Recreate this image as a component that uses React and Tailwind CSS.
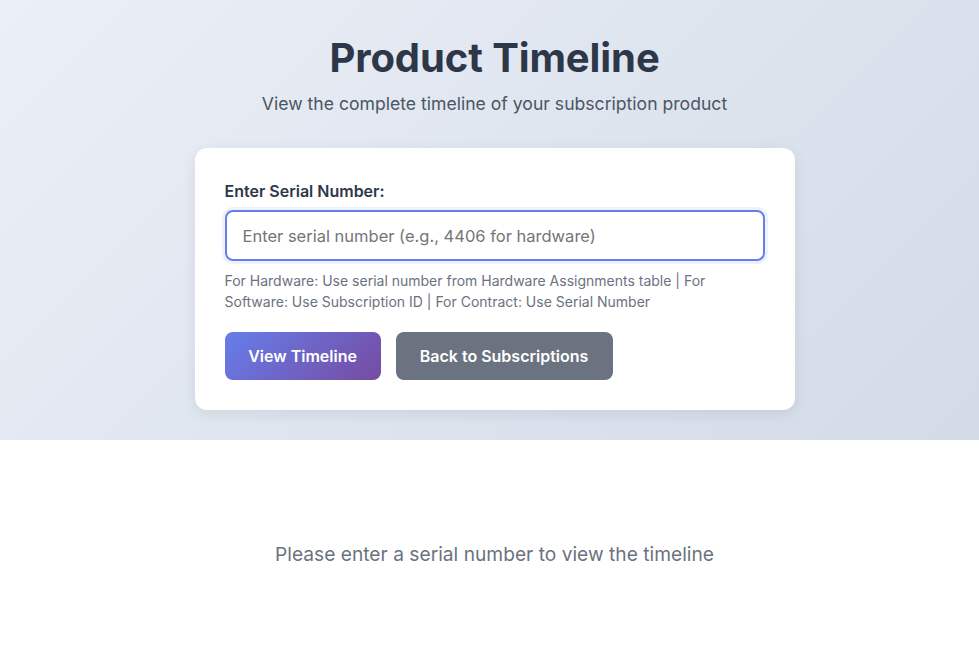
import { useState } from 'react'

export default function App() {
  const [serial, setSerial] = useState('')

  return (
    <div className="min-h-screen bg-white font-['Inter','Noto_Sans',sans-serif]">
      <div className="h-[440px] bg-[linear-gradient(135deg,#ebeff7_0%,#d3dbe7_100%)] flex flex-col items-center pt-[33px] pl-[10px]">
        <h1 className="text-[40px] leading-[50px] font-bold text-[#2d3748] tracking-[-0.1px]">Product Timeline</h1>
        <p className="mt-[8px] text-[17.6px] leading-[26px] text-[#4b5563]">
          View the complete timeline of your subscription product
        </p>

        <div className="mt-[31px] w-[600px] bg-white rounded-xl shadow-[0_4px_14px_rgba(0,0,0,0.08)] px-[30px] pt-[32px] pb-[30px]">
          <label className="block text-[16px] leading-[22px] font-semibold text-[#2d3748]">
            Enter Serial Number:
          </label>
          <input
            autoFocus
            value={serial}
            onChange={(e) => setSerial(e.target.value)}
            placeholder="Enter serial number (e.g., 4406 for hardware)"
            className="mt-[8px] block w-full h-[51px] px-[16px] text-[16.5px] text-[#2d3748] placeholder:text-[#757575] border-2 border-[#667eea] rounded-lg outline-none ring-[3px] ring-[#667eea]/10"
          />
          <p className="mt-[9px] text-[14px] leading-[21px] text-[#6b7280]">
            For Hardware: Use serial number from Hardware Assignments table | For Software: Use Subscription ID | For Contract: Use Serial Number
          </p>
          <div className="mt-[20px] flex gap-[15px]">
            <button className="h-[48px] w-[156px] rounded-lg bg-[linear-gradient(135deg,#667eea_0%,#764ba2_100%)] text-white text-[16px] font-semibold">
              View Timeline
            </button>
            <button className="h-[48px] w-[217px] rounded-lg bg-[#6b7280] text-white text-[16px] font-semibold">
              Back to Subscriptions
            </button>
          </div>
        </div>
      </div>

      <div className="flex justify-center pt-[100px] pl-[10px]">
        <p className="text-[19.2px] leading-[28px] text-[#6b7280]">Please enter a serial number to view the timeline</p>
      </div>
    </div>
  )
}
